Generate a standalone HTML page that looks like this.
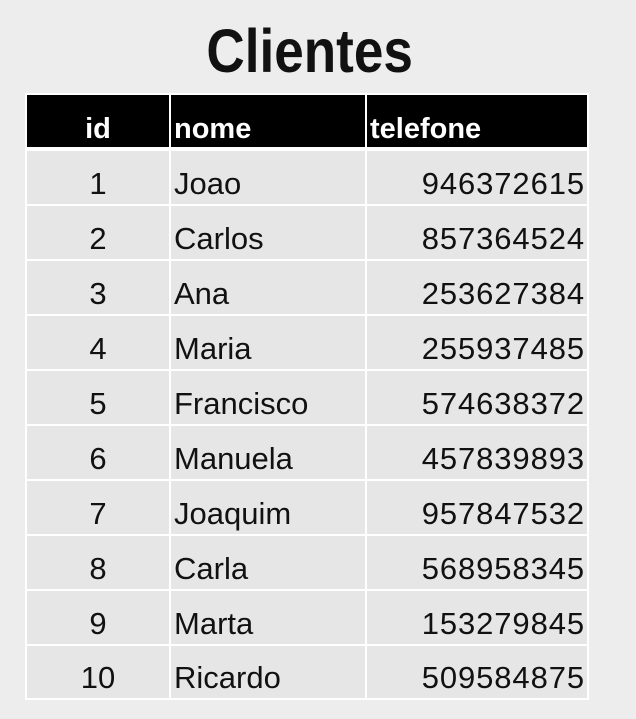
<!DOCTYPE html>
<html><head><meta charset="utf-8"><style>
html,body{margin:0;padding:0;}
body{width:636px;height:719px;background:#ededed;position:relative;overflow:hidden;font-family:"Liberation Sans",sans-serif;}
.title{position:absolute;left:0;width:620px;top:17px;text-align:center;font-weight:bold;font-size:61px;line-height:68px;color:#111;}
.title span{display:inline-block;transform:scaleX(0.87);}
.c{position:absolute;box-sizing:border-box;font-size:31px;color:#111;display:flex;align-items:center;padding-top:12px;}
.h{background:#000;color:#fff;font-weight:bold;font-size:29px;align-items:flex-end;padding-bottom:1px;padding-top:0;}
.r{background:#e6e6e6;}
.id{justify-content:center;}
.nm{padding-left:3px;}
.ph{justify-content:flex-end;padding-right:2px;letter-spacing:0.9px;}
.frame{position:absolute;left:25px;top:93px;width:564px;height:607px;background:#fff;}
</style></head><body>
<div class="title"><span>Clientes</span></div>
<div class="frame"></div>
<div class="c h id" style="left:27px;top:95px;width:142px;height:52px;">id</div>
<div class="c h nm" style="left:171px;top:95px;width:194px;height:52px;">nome</div>
<div class="c h nm" style="left:367px;top:95px;width:220px;height:52px;">telefone</div>

<div class="c r id" style="left:27px;top:151px;width:142px;height:53px;">1</div>
<div class="c r nm" style="left:171px;top:151px;width:194px;height:53px;">Joao</div>
<div class="c r ph" style="left:367px;top:151px;width:220px;height:53px;">946372615</div>

<div class="c r id" style="left:27px;top:206px;width:142px;height:53px;">2</div>
<div class="c r nm" style="left:171px;top:206px;width:194px;height:53px;">Carlos</div>
<div class="c r ph" style="left:367px;top:206px;width:220px;height:53px;">857364524</div>

<div class="c r id" style="left:27px;top:261px;width:142px;height:53px;">3</div>
<div class="c r nm" style="left:171px;top:261px;width:194px;height:53px;">Ana</div>
<div class="c r ph" style="left:367px;top:261px;width:220px;height:53px;">253627384</div>

<div class="c r id" style="left:27px;top:316px;width:142px;height:53px;">4</div>
<div class="c r nm" style="left:171px;top:316px;width:194px;height:53px;">Maria</div>
<div class="c r ph" style="left:367px;top:316px;width:220px;height:53px;">255937485</div>

<div class="c r id" style="left:27px;top:371px;width:142px;height:53px;">5</div>
<div class="c r nm" style="left:171px;top:371px;width:194px;height:53px;">Francisco</div>
<div class="c r ph" style="left:367px;top:371px;width:220px;height:53px;">574638372</div>

<div class="c r id" style="left:27px;top:426px;width:142px;height:53px;">6</div>
<div class="c r nm" style="left:171px;top:426px;width:194px;height:53px;">Manuela</div>
<div class="c r ph" style="left:367px;top:426px;width:220px;height:53px;">457839893</div>

<div class="c r id" style="left:27px;top:481px;width:142px;height:53px;">7</div>
<div class="c r nm" style="left:171px;top:481px;width:194px;height:53px;">Joaquim</div>
<div class="c r ph" style="left:367px;top:481px;width:220px;height:53px;">957847532</div>

<div class="c r id" style="left:27px;top:536px;width:142px;height:53px;">8</div>
<div class="c r nm" style="left:171px;top:536px;width:194px;height:53px;">Carla</div>
<div class="c r ph" style="left:367px;top:536px;width:220px;height:53px;">568958345</div>

<div class="c r id" style="left:27px;top:591px;width:142px;height:53px;">9</div>
<div class="c r nm" style="left:171px;top:591px;width:194px;height:53px;">Marta</div>
<div class="c r ph" style="left:367px;top:591px;width:220px;height:53px;">153279845</div>

<div class="c r id" style="left:27px;top:646px;width:142px;height:52px;">10</div>
<div class="c r nm" style="left:171px;top:646px;width:194px;height:52px;">Ricardo</div>
<div class="c r ph" style="left:367px;top:646px;width:220px;height:52px;">509584875</div>
</body></html>
